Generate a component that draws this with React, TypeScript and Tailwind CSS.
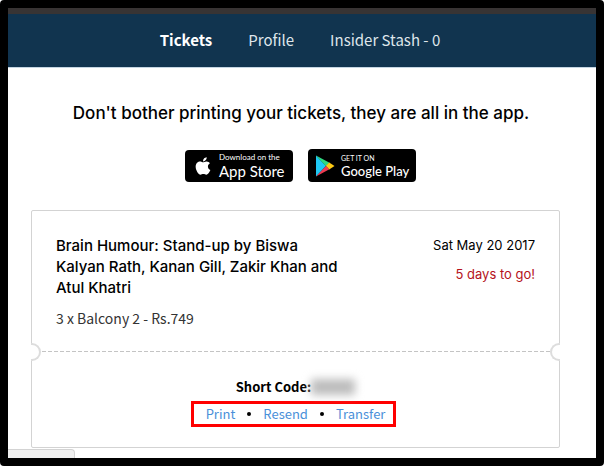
import { FaApple } from "react-icons/fa"

const navLinks = ["Tickets", "Profile", "Insider Stash - 0"]
const actions = ["Print", "Resend", "Transfer"]

function Header() {
    return (
        <header className="border-t-6 border-b border-t-[#383434] border-b-[#c5d5e2] bg-[#11344f]">
            <nav className="flex h-[53px] items-center justify-center gap-9 pr-1 text-[15px] text-[#dfe6eb]">
                {navLinks.map((link, index) => (
                    <a key={link} href="#" className={index === 0 ? "font-bold text-white" : ""}>
                        {link}
                    </a>
                ))}
            </nav>
        </header>
    )
}

function PlayLogo() {
    return (
        <svg viewBox="0 0 20 22" className="h-[22px] w-5 shrink-0" aria-hidden="true">
            <path d="M1 0.5 L11 11 L1 21.5 Z" fill="#1fc8f4" />
            <path d="M1 0.5 L14.5 7.8 L11 11.2 Z" fill="#2fd980" />
            <path d="M14.2 7.6 L19.5 11 L14.2 14.4 L10.8 11 Z" fill="#fdc914" />
            <path d="M1 21.5 L11 10.9 L14.4 14.3 Z" fill="#ee3b52" />
        </svg>
    )
}

function StoreBadges() {
    return (
        <div className="mt-6 flex items-center justify-center gap-[15px] pr-[3px] font-['Lato',sans-serif] text-white">
            <a href="#" className="flex h-8 w-[108px] items-center gap-1.5 rounded bg-black pl-2">
                <FaApple className="size-5 shrink-0" />
                <span className="flex flex-col">
                    <span className="text-[8px] leading-[10px]">Download on the</span>
                    <span className="text-[15px] leading-[18px]">App Store</span>
                </span>
            </a>
            <a href="#" className="flex h-[33px] w-[108px] items-center gap-1.5 rounded bg-black pl-[7px]">
                <PlayLogo />
                <span className="flex flex-col">
                    <span className="text-[7px] leading-[10px]">GET IT ON</span>
                    <span className="text-[13px] leading-4 font-medium">Google Play</span>
                </span>
            </a>
        </div>
    )
}

// Пунктирная линия с вырезами по краям билета
function TearLine() {
    return (
        <div className="relative h-[18px]">
            <svg className="absolute inset-x-0 top-2 h-px w-full" aria-hidden="true">
                <line x1="10" x2="100%" y1="0.5" y2="0.5" stroke="#c4c4c4" strokeDasharray="4 2" />
            </svg>
            <span className="absolute top-0 -left-px h-[18px] w-2.5 rounded-r-full border-2 border-l-0 border-[#dddddd] bg-white" />
            <span className="absolute top-0 -right-px h-[18px] w-2.5 rounded-l-full border-2 border-r-0 border-[#dddddd] bg-white" />
        </div>
    )
}

function Ticket() {
    return (
        <section className="mt-7 mr-9 ml-[23px] rounded-xs border border-[#d3d3d3]">
            <div className="flex justify-between px-6 pt-6 pb-[15px]">
                <div>
                    <h2 className="max-w-[290px] font-['Inter',sans-serif] text-[15px] leading-[21px] font-medium">
                        Brain Humour: Stand-up by Biswa Kalyan Rath, Kanan Gill, Zakir Khan and Atul Khatri
                    </h2>
                    <p className="mt-2.5 text-[14px] leading-5 text-[#333333]">3 x Balcony 2 - Rs.749</p>
                </div>
                <div className="flex flex-col gap-[9px] text-right font-['Inter',sans-serif] text-[13px] leading-5">
                    <p>Sat May 20 2017</p>
                    <p className="text-[#b5121b]">5 days to go!</p>
                </div>
            </div>
            <TearLine />
            <div className="flex flex-col items-center pt-4 pb-5 text-[13px] leading-5">
                <div className="flex items-center">
                    <span className="font-bold">Short Code:</span>
                    <span className="h-4 w-11 bg-[#bdbdbd] blur-xs" />
                </div>
                <div className="mt-1 mr-1 flex h-[26px] items-center gap-3 border-3 border-[#ff0000] pr-2 pl-3">
                    {actions.map((action, index) => (
                        <span key={action} className="flex items-center gap-3">
                            {index > 0 && <span className="size-1 rounded-full bg-black" />}
                            <a href="#" className="text-[#4a90d9]">{action}</a>
                        </span>
                    ))}
                </div>
            </div>
        </section>
    )
}

export default function App() {
    return (
        <div className="flex min-h-screen flex-col rounded border-8 border-black bg-white font-['Noto_Sans_CJK_SC',sans-serif] text-black">
            <Header />
            <main className="flex-1">
                <h1 className="mt-[33px] pr-0.5 text-center font-['Inter',sans-serif] text-[17px] leading-6 font-medium">
                    Don't bother printing your tickets, they are all in the app.
                </h1>
                <StoreBadges />
                <Ticket />
            </main>
            <footer className="h-[9px] w-[67px] rounded-tr-sm border-t border-r border-[#d3d3d3] bg-[#efefef]" />
        </div>
    )
}
